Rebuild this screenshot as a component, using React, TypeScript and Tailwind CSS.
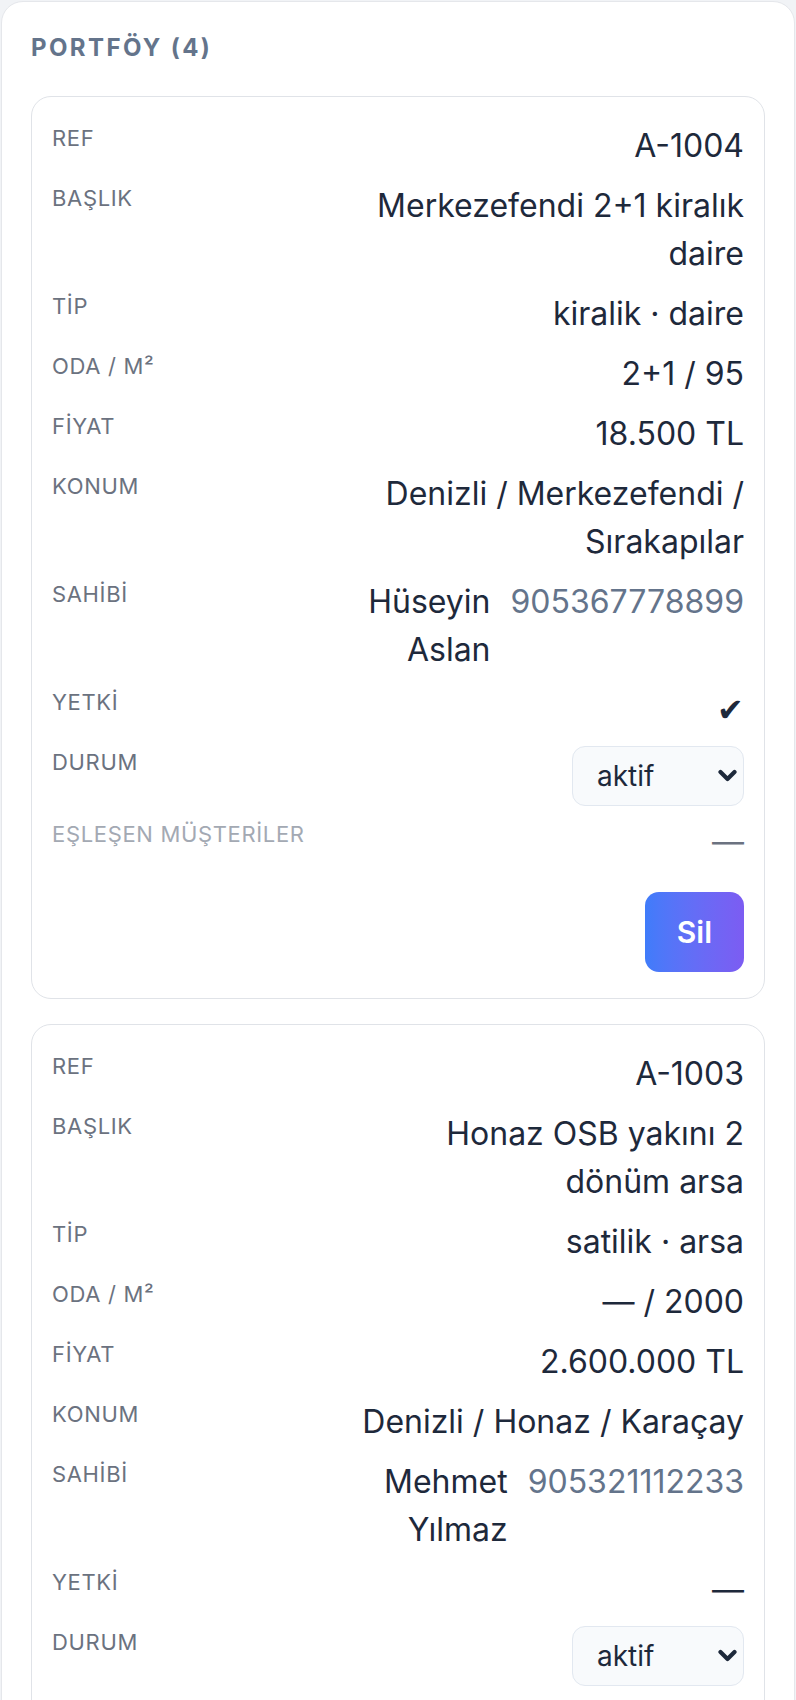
import type { ReactNode } from "react";

type Listing = {
  ref: string;
  title: string;
  type: string;
  rooms: string;
  price: string;
  location: string;
  owner: string;
  phone: string;
  authorized: boolean;
  status: string;
};

const LISTINGS: Listing[] = [
  {
    ref: "A-1004",
    title: "Merkezefendi 2+1 kiralık daire",
    type: "kiralik · daire",
    rooms: "2+1 / 95",
    price: "18.500 TL",
    location: "Denizli / Merkezefendi / Sırakapılar",
    owner: "Hüseyin Aslan",
    phone: "905367778899",
    authorized: true,
    status: "aktif",
  },
  {
    ref: "A-1003",
    title: "Honaz OSB yakını 2 dönüm arsa",
    type: "satilik · arsa",
    rooms: "— / 2000",
    price: "2.600.000 TL",
    location: "Denizli / Honaz / Karaçay",
    owner: "Mehmet Yılmaz",
    phone: "905321112233",
    authorized: false,
    status: "aktif",
  },
];

// labels are written in upper case here, css uppercase drops the dot of İ
function Label({ text, muted }: { text: string; muted?: boolean }) {
  return (
    <div className={"text-[22px] leading-8 tracking-[0.03em] " + (muted ? "text-[#a3a9b3]" : "text-[#6b7280]")}>
      {text}
    </div>
  );
}

function Row({ label, muted, children }: { label: string; muted?: boolean; children: ReactNode }) {
  return (
    <div className="grid grid-cols-[294px_1fr] items-start">
      <Label text={label} muted={muted} />
      <div className="text-right text-[32px] leading-[48px] text-[#1e293b]">{children}</div>
    </div>
  );
}

function StatusSelect({ value }: { value: string }) {
  return (
    <div className="flex justify-end">
      <div className="relative">
        <select
          defaultValue={value}
          className="h-[60px] w-[172px] appearance-none rounded-[13px] border border-[#e2e8f0] bg-[#f8fafc] pl-6 text-left text-[28px] text-[#1e293b] outline-none"
        >
          <option value="aktif">aktif</option>
          <option value="pasif">pasif</option>
          <option value="satildi">satildi</option>
        </select>
        <svg
          className="pointer-events-none absolute top-1/2 right-[7px] -translate-y-1/2"
          width="19"
          height="14"
          viewBox="0 0 19 14"
          fill="none"
        >
          <path d="M2.5 3 L9.5 10 L16.5 3" stroke="#1e293b" strokeWidth="4.2" strokeLinecap="round" strokeLinejoin="round" />
        </svg>
      </div>
    </div>
  );
}

function ListingCard({ item }: { item: Listing }) {
  return (
    <div className="rounded-[20px] border border-[#e0e3e8] bg-white px-5 pt-[25px] pb-[26px]">
      <div className="flex flex-col gap-3">
        <Row label="REF">{item.ref}</Row>
        <Row label="BAŞLIK">{item.title}</Row>
        <Row label="TİP">{item.type}</Row>
        <Row label="ODA / M²">{item.rooms}</Row>
        <Row label="FİYAT">{item.price}</Row>
        <Row label="KONUM">{item.location}</Row>
        <Row label="SAHİBİ">
          <div className="flex items-start justify-end gap-5">
            <span className="w-min text-right">{item.owner}</span>
            <span className="text-[#64748b]">{item.phone}</span>
          </div>
        </Row>
        <Row label="YETKİ">{item.authorized ? "✔" : "—"}</Row>
        <div className="grid grid-cols-[294px_1fr] items-start">
          <Label text="DURUM" />
          <StatusSelect value={item.status} />
        </div>
        <Row label="EŞLEŞEN MÜŞTERİLER" muted>
          <span className="text-[#6b7280]">—</span>
        </Row>
      </div>
      <div className="mt-[26px] flex justify-end">
        <button className="h-20 rounded-[14px] bg-linear-to-r from-[#3f7cfa] to-[#7c5cf2] px-8 text-[30px] font-semibold text-white">
          Sil
        </button>
      </div>
    </div>
  );
}

export default function App() {
  return (
    <div className="min-h-screen bg-[#f1f3f6] p-px font-[Inter,sans-serif]">
      <section className="rounded-[22px] border border-[#e5e7eb] bg-white px-[29px] pt-[30px] pb-8">
        <h2 className="mb-8 text-[24px] leading-8 font-bold tracking-[0.1em] text-[#64748b]">PORTFÖY (4)</h2>
        <div className="flex flex-col gap-[25px]">
          {LISTINGS.map((item) => (
            <ListingCard key={item.ref} item={item} />
          ))}
        </div>
      </section>
    </div>
  );
}
